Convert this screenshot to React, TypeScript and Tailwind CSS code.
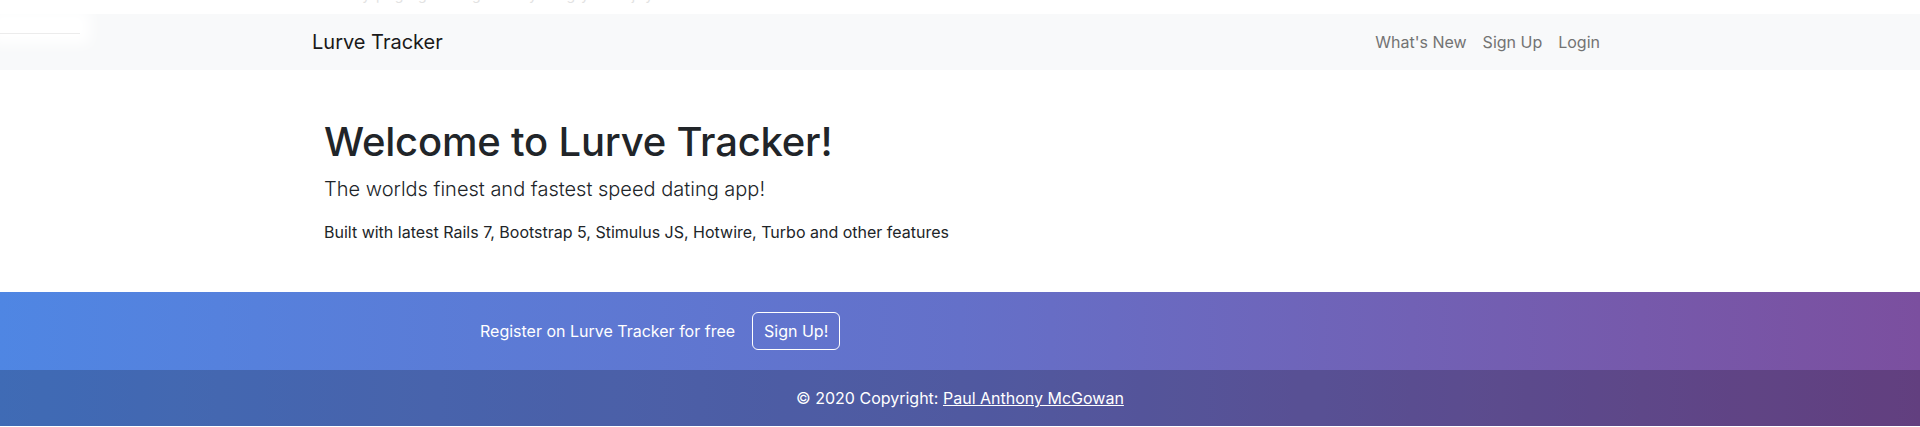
import React from "react";

const font = { fontFamily: "Inter, 'Noto Sans', sans-serif" };

const NavLink = ({ label }: { label: string }) => (
  <a href="#" className="px-2 py-2 text-[16px] text-[#737373] no-underline leading-6">
    {label}
  </a>
);

export default function App() {
  return (
    <div style={font} className="w-[1920px] min-h-[427px] bg-white text-[#212529] overflow-hidden">
      {/* faint leftover strip above the navbar */}
      <div className="h-[14px] overflow-hidden bg-white">
        <div className="pl-[353px] -mt-[14px] text-[14px] leading-[18px] text-[#e2e2e2] tracking-[1px]">
          by paging through everything you enjoy
        </div>
      </div>

      <nav className="relative h-[56px] bg-[#f8f9fa] py-2">
        <div className="pointer-events-none absolute left-0 top-[6px] h-[14px] w-[80px] border-b border-[#ececec] bg-white shadow-[0_0_14px_10px_white]" />
        <div className="mx-auto flex h-10 w-[1320px] items-center justify-between px-3">
          <a href="#" className="py-[5px] text-[20px] leading-[30px] text-[#1a1a1a]">
            Lurve Tracker
          </a>
          <div className="flex items-center">
            <NavLink label="What's New" />
            <NavLink label="Sign Up" />
            <NavLink label="Login" />
          </div>
        </div>
      </nav>

      <main className="mx-auto w-[1320px] pl-[24px] pt-12 pb-8">
        <h1 className="mb-2 text-[40px] leading-[48px] font-medium tracking-[-0.2px]">Welcome to Lurve Tracker!</h1>
        <p className="mb-4 text-[20px] leading-[30px] font-light">
          The worlds finest and fastest speed dating app!
        </p>
        <p className="mb-4 text-[16px] leading-6">
          Built with latest Rails 7, Bootstrap 5, Stimulus JS, Hotwire, Turbo and other features
        </p>
      </main>

      <section className="bg-gradient-to-r from-[#4f86e3] via-[#6470c9] to-[#7b4f9f]">
        <div className="flex h-[78px] items-center pl-[480px] text-white">
          <span className="mr-[17px] text-[16px] leading-6">Register on Lurve Tracker for free</span>
          <button className="h-[38px] rounded-md border border-white px-[11px] text-[16px] leading-6 text-white">
            Sign Up!
          </button>
        </div>
        <footer className="flex h-[56px] items-center justify-center bg-black/20 text-[16px] leading-6 text-white">
          © 2020 Copyright:&nbsp;
          <a href="#" className="underline text-white">
            Paul Anthony McGowan
          </a>
        </footer>
      </section>
    </div>
  );
}
